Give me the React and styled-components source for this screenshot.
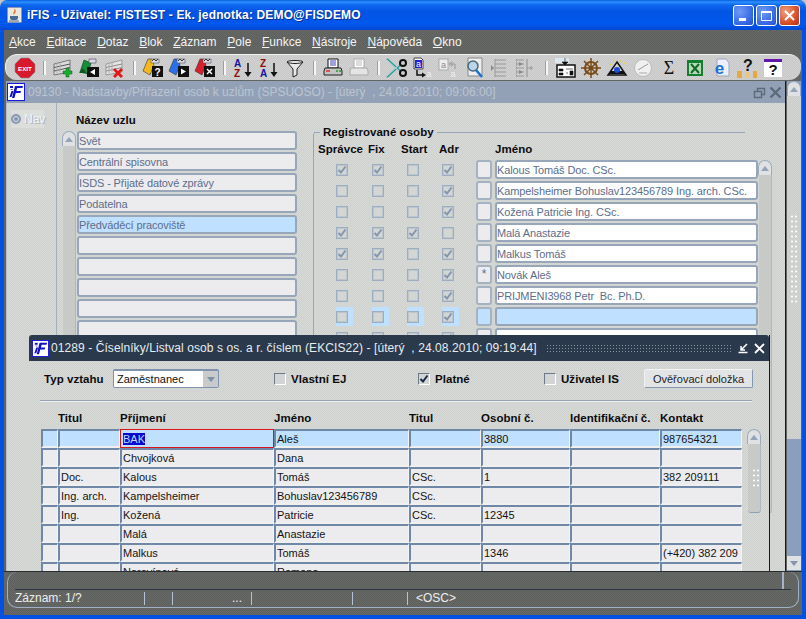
import React from 'react';
import styled, { createGlobalStyle, css } from 'styled-components';

const dither = (a, b) => css`
    background: repeating-conic-gradient(${a} 0 25%, ${b} 0 50%) 0 0 / 2px 2px;
`;

const GlobalStyle = createGlobalStyle`
    html, body {
        margin: 0;
        padding: 0;
        background: #c4c4c4;
        overflow: hidden;
    }
    * {
        box-sizing: border-box;
    }
    body {
        font-family: "Liberation Sans", Arial, sans-serif;
        font-size: 12px;
    }
`;

const Frame = styled.div`
    width: 806px;
    height: 619px;
    display: flex;
    flex-direction: column;
    overflow: hidden;
`;

const TitleBar = styled.div`
    height: 30px;
    flex: none;
    display: flex;
    align-items: center;
    padding: 0 6px 0 7px;
    border-radius: 7px 7px 0 0;
    background: linear-gradient(180deg, #0a5ee0 0, #2a90ff 2px, #0f66ee 5px, #0254e4 12px, #0058ee 24px, #0248d2 30px);
`;

const TitleText = styled.div`
    margin-left: 5px;
    color: #fff;
    font-size: 12px;
    font-weight: 700;
    letter-spacing: 0.15px;
    text-shadow: 1px 1px 0 #0a2f90;
    white-space: nowrap;
`;

const TitleButtons = styled.div`
    margin-left: auto;
    display: flex;
    gap: 2px;
`;

const XpButton = styled.div`
    width: 21px;
    height: 21px;
    border: 1px solid #fff;
    border-radius: 3px;
    display: flex;
    align-items: center;
    justify-content: center;
    background: ${(p) =>
        p.$danger
            ? 'radial-gradient(circle at 30% 30%, #f0a080, #d8502a 60%, #b83010)'
            : 'radial-gradient(circle at 30% 30%, #6f9cf5, #3a6ee6 60%, #2650cc)'};
`;

const Shell = styled.div`
    flex: 1;
    min-height: 0;
    display: flex;
    flex-direction: column;
    border: 4px solid #0450e0;
    border-top: 0;
    background: #636563;
`;

const MenuBar = styled.div`
    height: 24px;
    flex: none;
    display: flex;
    align-items: center;
    gap: 10.7px;
    padding-left: 5px;
    color: #f4f4f4;
    ${dither('#666866', '#5f615f')}
`;

const MenuItem = styled.span`
    white-space: nowrap;
`;

const Toolbar = styled.div`
    height: 26px;
    flex: none;
    margin: 0 1px;
    display: flex;
    align-items: center;
    padding-left: 6px;
    border-radius: 12px;
    border-top: 1px solid #f2f2f2;
    border-left: 1px solid #eee;
    ${dither('#d2d2d2', '#c8c8c8')}
`;

const ToolCell = styled.div`
    width: 26px;
    height: 22px;
    flex: none;
    display: flex;
    align-items: center;
    justify-content: center;
`;

const ToolSep = styled.div`
    width: 12px;
    flex: none;
    display: flex;
    justify-content: center;
    &::before {
        content: "";
        width: 2px;
        height: 14px;
        background: #f4f6f8;
        border-left: 1px solid #8fa0bc;
    }
`;

const Workspace = styled.div`
    position: relative;
    flex: 1;
    min-height: 0;
    display: flex;
    padding: 1px 1px 0 2px;
    overflow: hidden;
`;

const DocWindow = styled.div`
    width: 780px;
    flex: none;
    display: flex;
    flex-direction: column;
    border-right: 1px solid #1a1a1a;
`;

const DocTitle = styled.div`
    height: 22px;
    flex: none;
    display: flex;
    align-items: center;
    padding: 0 3px 0 1px;
    ${dither('#96a4ba', '#8f9eb5')}
`;

const DocTitleText = styled.div`
    margin-left: 3px;
    color: #bcc4d0;
    white-space: pre;
`;

const WindowIcons = styled.div`
    margin-left: auto;
    display: flex;
    align-items: center;
    gap: 3px;
`;

const DocBody = styled.div`
    flex: 1;
    min-height: 0;
    display: flex;
    ${dither('#d7d9d7', '#d0d2d0')}
`;

const NavPanel = styled.div`
    width: 51px;
    flex: none;
    padding: 7px 0 0 4px;
    border-right: 1px solid #a4b0c0;
    border-left: 1px solid #b4bcc8;
`;

const NavTab = styled.div`
    width: 33px;
    height: 18px;
    display: flex;
    align-items: center;
    gap: 3px;
    color: #f2f5f8;
    text-shadow: 1px 1px 0 #a6b2c2;
    background: #dcdedc;
`;

const NavRadio = styled.span`
    width: 10px;
    height: 10px;
    flex: none;
    border-radius: 50%;
    border: 2px solid #8a9ab0;
    background: #8696ac;
    box-shadow: inset 0 0 0 1px #d8dde4;
`;

const Content = styled.div`
    flex: 1;
    display: flex;
    align-items: flex-start;
    padding: 10px 0 0 5px;
`;

const NodeColumn = styled.div`
    width: 235px;
    flex: none;
`;

const Label = styled.div`
    font-size: 11.5px;
    font-weight: 700;
    color: #0c0c0c;
    letter-spacing: 0.04px;
    white-space: nowrap;
    height: 14px;
    line-height: 14px;
    padding-left: ${(p) => p.$pad || 0}px;
    width: ${(p) => (p.$w ? `${p.$w}px` : 'auto')};
    flex: none;
`;

const NodeBody = styled.div`
    margin-top: 4px;
    display: flex;
    gap: 1px;
`;

const ScrollBar = styled.div`
    width: 14px;
    flex: none;
    display: flex;
    flex-direction: column;
    height: ${(p) => p.$h}px;
`;

const ScrollUp = styled.div`
    height: 15px;
    flex: none;
    display: flex;
    align-items: center;
    justify-content: center;
    border: 1px solid #9aabbf;
    border-bottom: 0;
    border-radius: 7px 7px 0 0;
    background: #dfe1e3;
    &::before {
        content: "";
        border: 4px solid transparent;
        border-top: 0;
        border-bottom: 5px solid #93a3b8;
    }
`;

const ScrollTrack = styled.div`
    position: relative;
    flex: 1;
    margin-left: 1px;
    border-bottom: 1px solid #8fa0b6;
    border-right: 1px solid #b0b8c2;
    border-radius: 0 0 3px 3px;
    ${dither('#cbcdcb', '#c5c7c5')}
`;

const NodeRows = styled.div`
    width: 220px;
    display: flex;
    flex-direction: column;
    gap: 2px;
`;

const FormField = styled.div`
    height: 19px;
    font-size: 11px;
    line-height: 16px;
    padding-left: 0;
    flex: ${(p) => (p.$w ? 'none' : 'initial')};
    width: ${(p) => (p.$w ? `${p.$w}px` : 'auto')};
    border: 2px solid #97a6b8;
    border-radius: 3px;
    color: #5d6e8c;
    letter-spacing: -0.12px;
    white-space: pre;
    overflow: hidden;
    background: ${(p) => (p.$active ? '#c0e0ff' : p.$white ? '#fff' : '#ecebee')};
`;

const Group = styled.div`
    width: 432px;
    height: 450px;
    margin: 19px 0 0 16px;
    flex: none;
    border-left: 1px solid #97a6b8;
    border-top-left-radius: 4px;
`;

const GroupTitle = styled.div`
    margin-top: -7px;
    display: flex;
    align-items: center;
    gap: 3px;
    &::before {
        content: "";
        width: 6px;
        border-top: 1px solid #97a6b8;
    }
    &::after {
        content: "";
        flex: 1;
        border-top: 1px solid #97a6b8;
    }
`;

const PersonHead = styled.div`
    display: flex;
    margin-top: 3px;
`;

const PersonBlock = styled.div`
    width: 460px;
    margin-top: 4px;
    display: flex;
`;

const PersonRows = styled.div`
    width: 444px;
    flex: none;
    display: flex;
    flex-direction: column;
    gap: 2px;
    padding-left: 22px;
`;

const PersonRow = styled.div`
    height: 19px;
    display: flex;
    align-items: center;
`;

const CheckSlot = styled.div`
    width: ${(p) => p.$w}px;
    height: 19px;
    flex: none;
    display: flex;
`;

const CheckWash = styled.div`
    width: 17px;
    height: 19px;
    display: flex;
    align-items: center;
    background: ${(p) => (p.$active ? '#c0e0ff' : 'transparent')};
`;

const CheckBox = styled.div`
    width: 12px;
    height: 12px;
    flex: none;
    border: 1px solid #9daec2;
    box-shadow: inset 0 0 0 1px rgba(157, 174, 194, 0.4);
    background: #d4d6d4;
    display: flex;
    align-items: center;
    justify-content: center;
`;

const MarkerCell = styled.div`
    width: 16px;
    height: 19px;
    flex: none;
    margin-right: 3px;
    text-align: center;
    line-height: 14px;
    color: #5d6e8c;
    border: 2px solid #a4b2c2;
    border-radius: 3px;
    background: ${(p) => (p.$active ? '#c0e0ff' : '#ecebee')};
`;

const MainScroll = styled.div`
    width: 14px;
    margin-left: 1px;
    flex: none;
    display: flex;
    flex-direction: column;
    background: #8c9ebd;
`;

const MainThumb = styled.div`
    height: 343px;
    flex: none;
    display: flex;
    align-items: center;
    justify-content: center;
    padding-bottom: 18px;
    ${dither('#d2d4d2', '#cbcdcb')}
`;

const Grip = styled.div`
    width: ${(p) => p.$w}px;
    height: ${(p) => p.$h}px;
    background: radial-gradient(#fff 0.8px, transparent 1px) 0 0 / 4px 5px;
`;

const MainDown = styled.div`
    margin-top: auto;
    margin-bottom: 1px;
    height: 14px;
    flex: none;
    display: flex;
    align-items: center;
    justify-content: center;
    background: #dfe1e3;
    &::before {
        content: "";
        border: 4px solid transparent;
        border-bottom: 0;
        border-top: 5px solid #8495ad;
    }
`;

const Dialog = styled.div`
    position: absolute;
    left: 25px;
    top: 255px;
    width: 741px;
    height: 240px;
    display: flex;
    flex-direction: column;
    border-right: 1px solid #1a1a1a;
    ${dither('#d7d9d7', '#d0d2d0')}
`;

const DialogTitle = styled.div`
    height: 26px;
    flex: none;
    display: flex;
    align-items: center;
    padding: 0 3px 0 3px;
    border-radius: 3px 3px 0 0;
    background: #2a3a4c;
`;

const DialogTitleText = styled.div`
    margin-left: 2px;
    color: #e8ecf0;
    letter-spacing: 0.08px;
    white-space: pre;
`;

const Dots = styled.div`
    flex: 1;
    height: 9px;
    margin: 0 5px 0 9px;
    background: radial-gradient(#8794a4 0.8px, transparent 1px) 0 0 / 3px 3px;
`;

const FilterRow = styled.div`
    display: flex;
    flex: none;
    align-items: center;
    height: 21px;
    margin-top: 7px;
    padding-left: 15px;
`;

const Select = styled.div`
    width: 106px;
    height: 19px;
    flex: none;
    display: flex;
    justify-content: space-between;
    align-items: center;
    padding-left: 3px;
    font-size: 11px;
    color: #111;
    background: #fff;
    border: 1px solid #7f93ae;
    border-top-width: 2px;
    border-radius: 2px;
`;

const SelectArrow = styled.div`
    width: 15px;
    height: 100%;
    display: flex;
    align-items: center;
    justify-content: center;
    background: #c8cacc;
    &::before {
        content: "";
        border: 4px solid transparent;
        border-bottom: 0;
        border-top: 5px solid #7d8fa8;
    }
`;

const CheckField = styled.div`
    width: ${(p) => p.$w}px;
    margin-left: ${(p) => p.$left || 0}px;
    flex: none;
    display: flex;
    align-items: center;
    gap: 5px;
`;

const FilterBox = styled.div`
    width: 12px;
    height: 12px;
    flex: none;
    display: flex;
    align-items: center;
    justify-content: center;
    border: 1px solid #6f7a88;
    border-right-color: #fff;
    border-bottom-color: #fff;
    background: #d2d4d6;
`;

const ActionButton = styled.div`
    width: 109px;
    height: 19px;
    flex: none;
    text-align: center;
    font-size: 11px;
    line-height: 18px;
    color: #222;
    background: #e2e4e6;
    border: 1px solid #8498b2;
    border-top-color: #f4f4f4;
    border-left-color: #f0f0f0;
    border-radius: 2px;
`;

const Rule = styled.div`
    width: 712px;
    height: 2px;
    margin: 11px 0 0 11px;
    flex: none;
    background: #98a4b2;
    border-bottom: 1px solid #eef0f2;
`;

const tableColumns = '17px 62px 154px 135px 72px 89px 90px 82px';

const TableHead = styled.div`
    display: grid;
    flex: none;
    grid-template-columns: ${tableColumns};
    margin: 9px 0 4px 12px;
    width: 701px;
`;

const TableArea = styled.div`
    display: flex;
    flex: none;
    align-items: flex-start;
    padding-left: 12px;
`;

const Table = styled.div`
    width: 701px;
    flex: none;
    display: flex;
    flex-direction: column;
`;

const TableRow = styled.div`
    display: grid;
    grid-template-columns: ${tableColumns};
    height: 19px;
    flex: none;
`;

const TableCell = styled.div`
    height: 19px;
    font-size: 11px;
    line-height: 15px;
    padding: 1px 0 0 ${(p) => (p.$focus ? 2 : 1)}px;
    color: #141414;
    white-space: nowrap;
    overflow: hidden;
    border-top: 2px solid #6f88a8;
    border-left: 2px solid #6f88a8;
    border-right: 1px solid #f4f4f4;
    border-bottom: 2px solid #f0f0f0;
    background: ${(p) => (p.$active ? '#c0e0ff' : '#ecebee')};
    ${(p) =>
        p.$focus &&
        css`
            border: 1px solid #d81818;
            outline: 1px solid #d81818;
            outline-offset: -1px;
            line-height: 16px;
        `}
`;

const SelectedText = styled.span`
    background: #0808d0;
    color: #b8d8ff;
`;

const DialogScroll = styled(ScrollBar)`
    margin-left: 5px;
`;

const TrackGrip = styled(Grip)`
    position: absolute;
    left: 4px;
    top: 24px;
`;

const StatusBar = styled.div`
    height: 44px;
    flex: none;
    position: relative;
    padding: 0 3px;
    border-top: 1px solid #2a2c30;
    ${dither('#666866', '#5f615f')}
`;

const StatusBox = styled.div`
    height: 36px;
    display: flex;
    flex-direction: column;
    padding: 0 7px 0 7px;
    border: 1px solid #9fb0c8;
    border-top: 0;
    border-radius: 10px;
`;

const StatusTop = styled.div`
    height: 18px;
    flex: none;
    display: flex;
    justify-content: flex-end;
    padding-right: 7px;
    border-bottom: 1px solid #2a3442;
    &::after {
        content: "";
        width: 2px;
        background: #a8b4c6;
    }
`;

const StatusCells = styled.div`
    flex: 1;
    display: flex;
    align-items: center;
    color: #eee;
`;

const StatusCell = styled.div`
    width: ${(p) => p.$w}px;
    height: 13px;
    line-height: 13px;
    flex: none;
    text-align: ${(p) => (p.$end ? 'right' : 'left')};
    padding-right: ${(p) => (p.$end ? 9 : 0)}px;
    padding-left: ${(p) => p.$pad || 0}px;
    border-right: ${(p) => (p.$open ? '0' : '1px solid #b4c2d4')};
    white-space: pre;
`;

const Logo = ({ size = 18 }) => (
    <svg width={size} height={size} viewBox="0 0 18 18" style={{ flex: 'none' }}>
        <rect x="0.5" y="0.5" width="17" height="17" fill="#fff" stroke="#1818d8" />
        <path d="M3 6h3l-1 1M2.5 14l2-6h2l-2 6z" fill="#1010c8" />
        <path d="M8 3h8l-.6 2h-5.2l-.8 3h4.6l-.6 2h-4.6l-1.4 5h-2.4z" fill="#1010c8" />
        <rect x="3" y="3" width="3" height="2" fill="#1010c8" />
    </svg>
);

const JavaIcon = () => (
    <svg width="15" height="16" viewBox="0 0 15 16" style={{ flex: 'none' }}>
        <rect x="0.5" y="0.5" width="14" height="15" rx="1" fill="#ece8dc" stroke="#8a96b8" />
        <path d="M7 2c2 2-2 3 0 6 0-2 3-2 1-6z" fill="#e8661a" />
        <path d="M3 9h8v2c0 1-1 2-2 2H5c-1 0-2-1-2-2z" fill="#4a6a96" />
        <path d="M2 14h10" stroke="#4a6a96" />
    </svg>
);

const SmallGlyph = ({ d, color = '#fff', w = 2 }) => (
    <svg width="13" height="13" viewBox="0 0 13 13">
        <path d={d} fill="none" stroke={color} strokeWidth={w} />
    </svg>
);

const Icon = ({ children }) => (
    <svg width="22" height="22" viewBox="0 0 22 22">
        {children}
    </svg>
);

const RecordStack = ({ pale }) => (
    <>
        <path d="M2 7 18 3v12L2 18z" fill={pale ? '#e4e4e4' : '#dcdcdc'} stroke={pale ? '#9a9a9a' : '#777'} />
        <path d="M2 10.5 18 7M2 14 18 10.500" stroke={pale ? '#8a8a8a' : '#555'} />
        <path d="M5 6.500v10M8 5.500v10" stroke="#aaa" />
    </>
);

const NoteStack = ({ color, glyph }) => (
    <>
        <path d="M6 2 1 14l7 4 4-10-2-6z" fill={color} stroke="#333" strokeWidth="0.6" />
        <path d="M9 2h8v4H9z" fill="#d8d8e8" stroke="#555" strokeWidth="0.6" />
        <path d="M10 4l2-2 2 2 2-2" stroke="#333" fill="none" />
        <rect x="10" y="9" width="11" height="11" fill="#111" />
        {glyph}
    </>
);

const SortIcon = ({ top, bottom, topColor, bottomColor }) => (
    <Icon>
        <text x="2" y="10" fontFamily="Liberation Sans" fontWeight="700" fontSize="10" fill={topColor}>{top}</text>
        <text x="2" y="20" fontFamily="Liberation Sans" fontWeight="700" fontSize="10" fill={bottomColor}>{bottom}</text>
        <path d="M16 6v11" stroke="#111" strokeWidth="1.500" />
        <path d="M12.500 15h7L16 20z" fill="#111" />
    </Icon>
);

const PrinterIcon = ({ pale }) => (
    <Icon>
        <path d="M6 2h10v9H6z" fill="#fff" stroke={pale ? '#aaa' : '#111'} />
        <path d="M8 4h6M8 6h6M8 8h6" stroke={pale ? '#bbb' : '#4444b0'} />
        <path d="M3 11h16l1 3v4H2v-4z" fill={pale ? '#e4e4e4' : '#c4c4c4'} stroke={pale ? '#aaa' : '#222'} />
        {!pale && <path d="M4 14h4" stroke="#e03030" strokeWidth="1.500" />}
        {!pale && <path d="M14 14h2M17 14h2" stroke="#20a020" strokeWidth="1.500" />}
    </Icon>
);

const ToolIcons = [
    <Icon>
        <path d="M7 1h8l6 6v8l-6 6H7l-6-6V7z" fill="#d8182c" />
        <path d="M7 1h8l6 6v8l-6 6H7l-6-6V7z" fill="none" stroke="#8c8c8c" strokeWidth="0.6" />
        <text x="11" y="13.500" textAnchor="middle" fontFamily="Liberation Sans" fontWeight="700" fontSize="6.200" fill="#fff">EXIT</text>
    </Icon>,
    'sep',
    <Icon>
        <RecordStack />
        <path d="M14 11h3v3h3v3h-3v3h-3v-3h-3v-3h3z" fill="#18b030" stroke="#0a5a18" strokeWidth="0.5" />
    </Icon>,
    <Icon>
        <path d="M2 15 6 3l7 3-3 11z" fill="#14903c" stroke="#0a3a18" strokeWidth="0.6" />
        <path d="M1 16l4-5 3 5z" fill="#0a5a20" />
        <path d="M11 2h7v4h-7z" fill="#d8d8e8" stroke="#444" strokeWidth="0.6" />
        <rect x="9" y="10" width="12" height="10" fill="#111" />
        <path d="M17 12v6l-5-3z" fill="#fff" />
    </Icon>,
    <Icon>
        <RecordStack pale />
        <path d="M11 11l3 3 3-3 2 2-3 3 3 3-2 2-3-3-3 3-2-2 3-3-3-3z" fill="#e01818" />
    </Icon>,
    'sep',
    <Icon>
        <NoteStack color="#f4b81e" glyph={<text x="15.500" y="18.500" textAnchor="middle" fontFamily="Liberation Sans" fontWeight="700" fontSize="10" fill="#fff">?</text>} />
    </Icon>,
    <Icon>
        <NoteStack color="#2a70e8" glyph={<path d="M13 11.500v6l5-3z" fill="#fff" />} />
    </Icon>,
    <Icon>
        <NoteStack color="#d8202c" glyph={<path d="M13 12l5 5M18 12l-5 5" stroke="#fff" strokeWidth="1.500" />} />
    </Icon>,
    'sep',
    <SortIcon top="A" bottom="Z" topColor="#1414a0" bottomColor="#8a1010" />,
    <SortIcon top="Z" bottom="A" topColor="#8a1010" bottomColor="#1414a0" />,
    <Icon>
        <path d="M3 5c0-2 16-2 16 0l-6 7v6l-4 2v-8z" fill="#e8e8e8" stroke="#222" />
        <path d="M3 5c3 2 13 2 16 0" fill="none" stroke="#222" />
    </Icon>,
    'sep',
    <PrinterIcon />,
    <PrinterIcon pale />,
    'sep',
    <Icon>
        <path d="M1 2l13 12M1 20 14 8" stroke="#2a9a98" strokeWidth="2" />
        <path d="M1 3l12 11M1 19 13 8" stroke="#d8f0f0" strokeWidth="0.8" />
        <circle cx="17" cy="6" r="3" fill="none" stroke="#111" strokeWidth="2" />
        <circle cx="17" cy="16" r="3" fill="none" stroke="#111" strokeWidth="2" />
    </Icon>,
    <Icon>
        <path d="M2 1h7l2 2v9H2z" fill="#fff" stroke="#444" />
        <rect x="3" y="3" width="7" height="8" fill="#2020e0" />
        <text x="6.500" y="10" textAnchor="middle" fontFamily="Liberation Sans" fontSize="9" fill="#fff">a</text>
        <path d="M5 13v5h6" fill="none" stroke="#111" strokeWidth="1.500" />
        <path d="M10 15.500v5l4-2.500z" fill="#111" />
        <text x="17" y="20" textAnchor="middle" fontFamily="Liberation Sans" fontSize="9" fill="#eee">a</text>
    </Icon>,
    <Icon>
        <rect x="1" y="2" width="9" height="11" fill="#eee" stroke="#aaa" />
        <text x="5.500" y="10.500" textAnchor="middle" fontFamily="Liberation Sans" fontSize="9" fill="#888">a</text>
        <path d="M14 5l-3 2 3 2zM14 7h3v5" fill="none" stroke="#999" />
        <text x="15" y="20" textAnchor="middle" fontFamily="Liberation Sans" fontSize="9" fill="#f0f0f0">a</text>
    </Icon>,
    <Icon>
        <path d="M4 1h14v18H4z" fill="#eee" stroke="#888" />
        <circle cx="9" cy="9" r="5" fill="#bcd4e8" stroke="#4a6a7a" strokeWidth="1.500" />
        <path d="M12 13l6 7" stroke="#1a70d0" strokeWidth="2.500" />
    </Icon>,
    <Icon>
        <path d="M1 8v6l3-3z" fill="#8a8a8a" />
        <path d="M5 2v18M5 3h11M5 7h11M5 11h11M5 15h11M5 19h11" stroke="#999" />
    </Icon>,
    <Icon>
        <path d="M0 2v18M0 3h8M0 7h8M0 11h8M0 15h8M0 19h8M11 2v18" stroke="#999" strokeWidth="1.200" />
        <path d="M3 5v4l4-2zM3 13v4l4-2z" fill="#888" />
        <path d="M11 11h6M15 9v4" stroke="#999" />
    </Icon>,
    'sep',
    <Icon>
        <rect x="1" y="1" width="14" height="5" fill="#dce8f0" />
        <rect x="3" y="8" width="18" height="12" fill="#fff" stroke="#111" strokeWidth="1.500" />
        <path d="M5 12h4v2H5zM5 16h4v2H5zM12 12h7M12 16h2M16 14h3v4h-3z" fill="#111" stroke="#111" strokeWidth="0.6" />
        <path d="M11 1v6M8 5h6l-3 3z" fill="#111" stroke="#111" strokeWidth="0.6" />
    </Icon>,
    <Icon>
        <circle cx="11" cy="11" r="6" fill="none" stroke="#7a4a18" strokeWidth="2" />
        <path d="M11 1v20M1 11h20M4 4l14 14M18 4 4 18" stroke="#7a4a18" strokeWidth="1.500" />
        <circle cx="11" cy="11" r="2" fill="#7a4a18" />
    </Icon>,
    <Icon>
        <path d="M11 5 20 18H2z" fill="#d8d8d8" stroke="#111" strokeWidth="1.500" />
        <path d="M3 17h16l-2-3H5z" fill="#111" />
        <circle cx="11" cy="13" r="3" fill="#1a50d8" />
        <path d="M3 6l2 2M7 3l1 2M15 3l-1 2M19 6l-2 2" stroke="#e8d020" />
    </Icon>,
    <Icon>
        <circle cx="11" cy="11" r="8.500" fill="#f0f0f0" stroke="#bbb" />
        <path d="M6 13 16 7" stroke="#999" />
        <path d="M7 16h8" stroke="#aaa" />
    </Icon>,
    <Icon>
        <text x="11" y="17" textAnchor="middle" fontFamily="Liberation Serif" fontSize="18" fill="#111">Σ</text>
    </Icon>,
    <Icon>
        <rect x="3" y="3" width="16" height="16" fill="#128030" />
        <rect x="5" y="6" width="12" height="11" fill="#b8d8b8" />
        <path d="M7 7l8 9M15 7l-8 9" stroke="#0c6a28" strokeWidth="2" />
    </Icon>,
    <Icon>
        <path d="M7 2h9l3 4v13H7z" fill="#eef" stroke="#9ab" />
        <text x="9.500" y="17" textAnchor="middle" fontFamily="Liberation Sans" fontWeight="700" fontSize="17" fill="#1a70d8">e</text>
    </Icon>,
    <Icon>
        <text x="12" y="14" textAnchor="middle" fontFamily="Liberation Sans" fontWeight="700" fontSize="16" fill="#111">?</text>
        <rect x="1" y="14" width="5" height="7" fill="#e8a840" />
        <rect x="9" y="15" width="5" height="6" fill="#e8c880" />
        <rect x="17" y="14" width="4" height="7" fill="#e8a840" />
    </Icon>,
    <Icon>
        <rect x="2" y="2" width="18" height="18" fill="#fff" />
        <rect x="2" y="2" width="18" height="3" fill="#6018a8" />
        <text x="11" y="18" textAnchor="middle" fontFamily="Liberation Sans" fontWeight="700" fontSize="15" fill="#111">?</text>
    </Icon>,
];

const menus = ['Akce', 'Editace', 'Dotaz', 'Blok', 'Záznam', 'Pole', 'Funkce', 'Nástroje', 'Nápověda', 'Okno'];

const nodes = ['Svět', 'Centrální spisovna', 'ISDS - Přijaté datové zprávy', 'Podatelna', 'Předváděcí pracoviště', '', '', '', '', ''];

const persons = [
    { name: 'Kalous Tomáš Doc. CSc.', checks: [1, 1, 0, 1] },
    { name: 'Kampelsheimer Bohuslav123456789 Ing. arch. CSc.', checks: [0, 0, 0, 1] },
    { name: 'Kožená Patricie Ing. CSc.', checks: [0, 0, 0, 1] },
    { name: 'Malá Anastazie', checks: [1, 1, 1, 0] },
    { name: 'Malkus Tomáš', checks: [1, 1, 0, 1] },
    { name: 'Novák Aleš', checks: [0, 0, 0, 1], mark: '*' },
    { name: 'PRIJMENI3968 Petr  Bc. Ph.D.', checks: [0, 0, 0, 1] },
    { name: '', checks: [0, 0, 0, 1], active: true },
    { name: '', checks: [0, 0, 0, 1] },
];

const slotWidths = [36, 35, 35, 34];

const personLabels = [
    { text: 'Správce', w: 54, pad: 4 },
    { text: 'Fix', w: 33 },
    { text: 'Start', w: 38 },
    { text: 'Adr', w: 56 },
    { text: 'Jméno' },
];

const rows = [
    ['', '', 'BAK', 'Aleš', '', '3880', '', '987654321'],
    ['', '', 'Chvojková', 'Dana', '', '', '', ''],
    ['', 'Doc.', 'Kalous', 'Tomáš', 'CSc.', '1', '', '382 209111'],
    ['', 'Ing. arch.', 'Kampelsheimer', 'Bohuslav123456789', 'CSc.', '', '', ''],
    ['', 'Ing.', 'Kožená', 'Patricie', 'CSc.', '12345', '', ''],
    ['', '', 'Malá', 'Anastazie', '', '', '', ''],
    ['', '', 'Malkus', 'Tomáš', '', '1346', '', '(+420) 382 209'],
    ['', '', 'Narovínová', 'Romana', '', '', '', ''],
];

const heads = ['', 'Titul', 'Příjmení', 'Jméno', 'Titul', 'Osobní č.', 'Identifikační č.', 'Kontakt'];

const CheckMark = ({ color = '#8496ae', w = 2 }) => (
    <svg width="10" height="10" viewBox="0 0 10 10">
        <path d="M1.500 5 4 7.500 8.500 1.500" fill="none" stroke={color} strokeWidth={w} />
    </svg>
);

const App = () => {
    return (
        <Frame>
            <GlobalStyle />
            <TitleBar>
                <JavaIcon />
                <TitleText>iFIS - Uživatel: FISTEST - Ek. jednotka: DEMO@FISDEMO</TitleText>
                <TitleButtons>
                    <XpButton>
                        <SmallGlyph d="M2 10.500h7" w={3} />
                    </XpButton>
                    <XpButton>
                        <SmallGlyph d="M1.500 2.500h10v9h-10zM1.500 3.500h10" w={1} />
                    </XpButton>
                    <XpButton $danger>
                        <SmallGlyph d="M2 2l9 9M11 2l-9 9" />
                    </XpButton>
                </TitleButtons>
            </TitleBar>
            <Shell>
                <MenuBar>
                    {menus.map((m) => (
                        <MenuItem key={m}>
                            <u>{m[0]}</u>
                            {m.slice(1)}
                        </MenuItem>
                    ))}
                </MenuBar>
                <Toolbar>
                    {ToolIcons.map((icon, i) =>
                        icon === 'sep' ? <ToolSep key={i} /> : <ToolCell key={i}>{icon}</ToolCell>
                    )}
                </Toolbar>
                <Workspace>
                    <DocWindow>
                        <DocTitle>
                            <Logo />
                            <DocTitleText>
                                {'09130 - Nadstavby/Přiřazení osob k uzlům (SPSUOSO) - [úterý  , 24.08.2010; 09:06:00]'}
                            </DocTitleText>
                            <WindowIcons>
                                <SmallGlyph d="M1.500 5.500h7v6h-7zM4.500 5V2.500h7v6H9" color="#5c6a7c" w={1.4} />
                                <SmallGlyph d="M1.500 1.500l10 10M11.500 1.500l-10 10" color="#5c6a7c" w={2.4} />
                            </WindowIcons>
                        </DocTitle>
                        <DocBody>
                            <NavPanel>
                                <NavTab>
                                    <NavRadio />
                                    Nav
                                </NavTab>
                            </NavPanel>
                            <Content>
                                <NodeColumn>
                                    <Label $pad={14}>Název uzlu</Label>
                                    <NodeBody>
                                        <ScrollBar $h={210}>
                                            <ScrollUp />
                                            <ScrollTrack />
                                        </ScrollBar>
                                        <NodeRows>
                                            {nodes.map((n, i) => (
                                                <FormField key={i} $active={i === 4}>
                                                    {n}
                                                </FormField>
                                            ))}
                                        </NodeRows>
                                    </NodeBody>
                                </NodeColumn>
                                <Group>
                                    <GroupTitle>
                                        <Label>Registrované osoby</Label>
                                    </GroupTitle>
                                    <PersonHead>
                                        {personLabels.map((l) => (
                                            <Label key={l.text} $w={l.w} $pad={l.pad}>
                                                {l.text}
                                            </Label>
                                        ))}
                                    </PersonHead>
                                    <PersonBlock>
                                        <PersonRows>
                                            {persons.map((p, i) => (
                                                <PersonRow key={i}>
                                                    {p.checks.map((c, j) => (
                                                        <CheckSlot key={j} $w={slotWidths[j]}>
                                                            <CheckWash $active={p.active}>
                                                                <CheckBox>{c ? <CheckMark /> : null}</CheckBox>
                                                            </CheckWash>
                                                        </CheckSlot>
                                                    ))}
                                                    <MarkerCell $active={p.active}>{p.mark}</MarkerCell>
                                                    <FormField $w={263} $white={!p.active} $active={p.active}>
                                                        {p.name}
                                                    </FormField>
                                                </PersonRow>
                                            ))}
                                        </PersonRows>
                                        <ScrollBar $h={353}>
                                            <ScrollUp />
                                            <ScrollTrack />
                                        </ScrollBar>
                                    </PersonBlock>
                                </Group>
                            </Content>
                        </DocBody>
                    </DocWindow>
                    <MainScroll>
                        <ScrollUp />
                        <MainThumb>
                            <Grip $w={8} $h={90} />
                        </MainThumb>
                        <MainDown />
                    </MainScroll>
                    <Dialog>
                        <DialogTitle>
                            <Logo size={17} />
                            <DialogTitleText>
                                {'01289 - Číselníky/Listval osob s os. a r. číslem (EKCIS22) - [úterý  , 24.08.2010; 09:19:44]'}
                            </DialogTitleText>
                            <Dots />
                            <WindowIcons>
                                <SmallGlyph d="M1.500 10.500h9M10 2 4 8M4 4v4h4" w={1.5} />
                                <SmallGlyph d="M2 2l9 9M11 2l-9 9" w={1.8} />
                            </WindowIcons>
                        </DialogTitle>
                        <FilterRow>
                            <Label $w={69}>Typ vztahu</Label>
                            <Select>
                                Zaměstnanec
                                <SelectArrow />
                            </Select>
                            <CheckField $w={144} $left={55}>
                                <FilterBox />
                                <Label>Vlastní EJ</Label>
                            </CheckField>
                            <CheckField $w={126}>
                                <FilterBox>
                                    <CheckMark color="#1a2a44" />
                                </FilterBox>
                                <Label>Platné</Label>
                            </CheckField>
                            <CheckField $w={100}>
                                <FilterBox />
                                <Label>Uživatel IS</Label>
                            </CheckField>
                            <ActionButton>Ověřovací doložka</ActionButton>
                        </FilterRow>
                        <Rule />
                        <TableHead>
                            {heads.map((h, i) => (
                                <Label key={i}>{h}</Label>
                            ))}
                        </TableHead>
                        <TableArea>
                            <Table>
                                {rows.map((r, i) => (
                                    <TableRow key={i}>
                                        {r.map((v, j) => (
                                            <TableCell key={j} $active={i === 0} $focus={i === 0 && j === 2}>
                                                {i === 0 && j === 2 ? <SelectedText>{v}</SelectedText> : v}
                                            </TableCell>
                                        ))}
                                    </TableRow>
                                ))}
                            </Table>
                            <DialogScroll $h={84}>
                                <ScrollUp />
                                <ScrollTrack>
                                    <TrackGrip $w={8} $h={20} />
                                </ScrollTrack>
                            </DialogScroll>
                        </TableArea>
                    </Dialog>
                </Workspace>
                <StatusBar>
                    <StatusBox>
                        <StatusTop />
                        <StatusCells>
                            <StatusCell $w={130}>Záznam: 1/?</StatusCell>
                            <StatusCell $w={28} />
                            <StatusCell $w={79} $end>
                                ...
                            </StatusCell>
                            <StatusCell $w={101} />
                            <StatusCell $w={55} />
                            <StatusCell $w={80} $pad={8} $open>
                                {'<OSC>'}
                            </StatusCell>
                        </StatusCells>
                    </StatusBox>
                </StatusBar>
            </Shell>
        </Frame>
    );
};

export default App;
